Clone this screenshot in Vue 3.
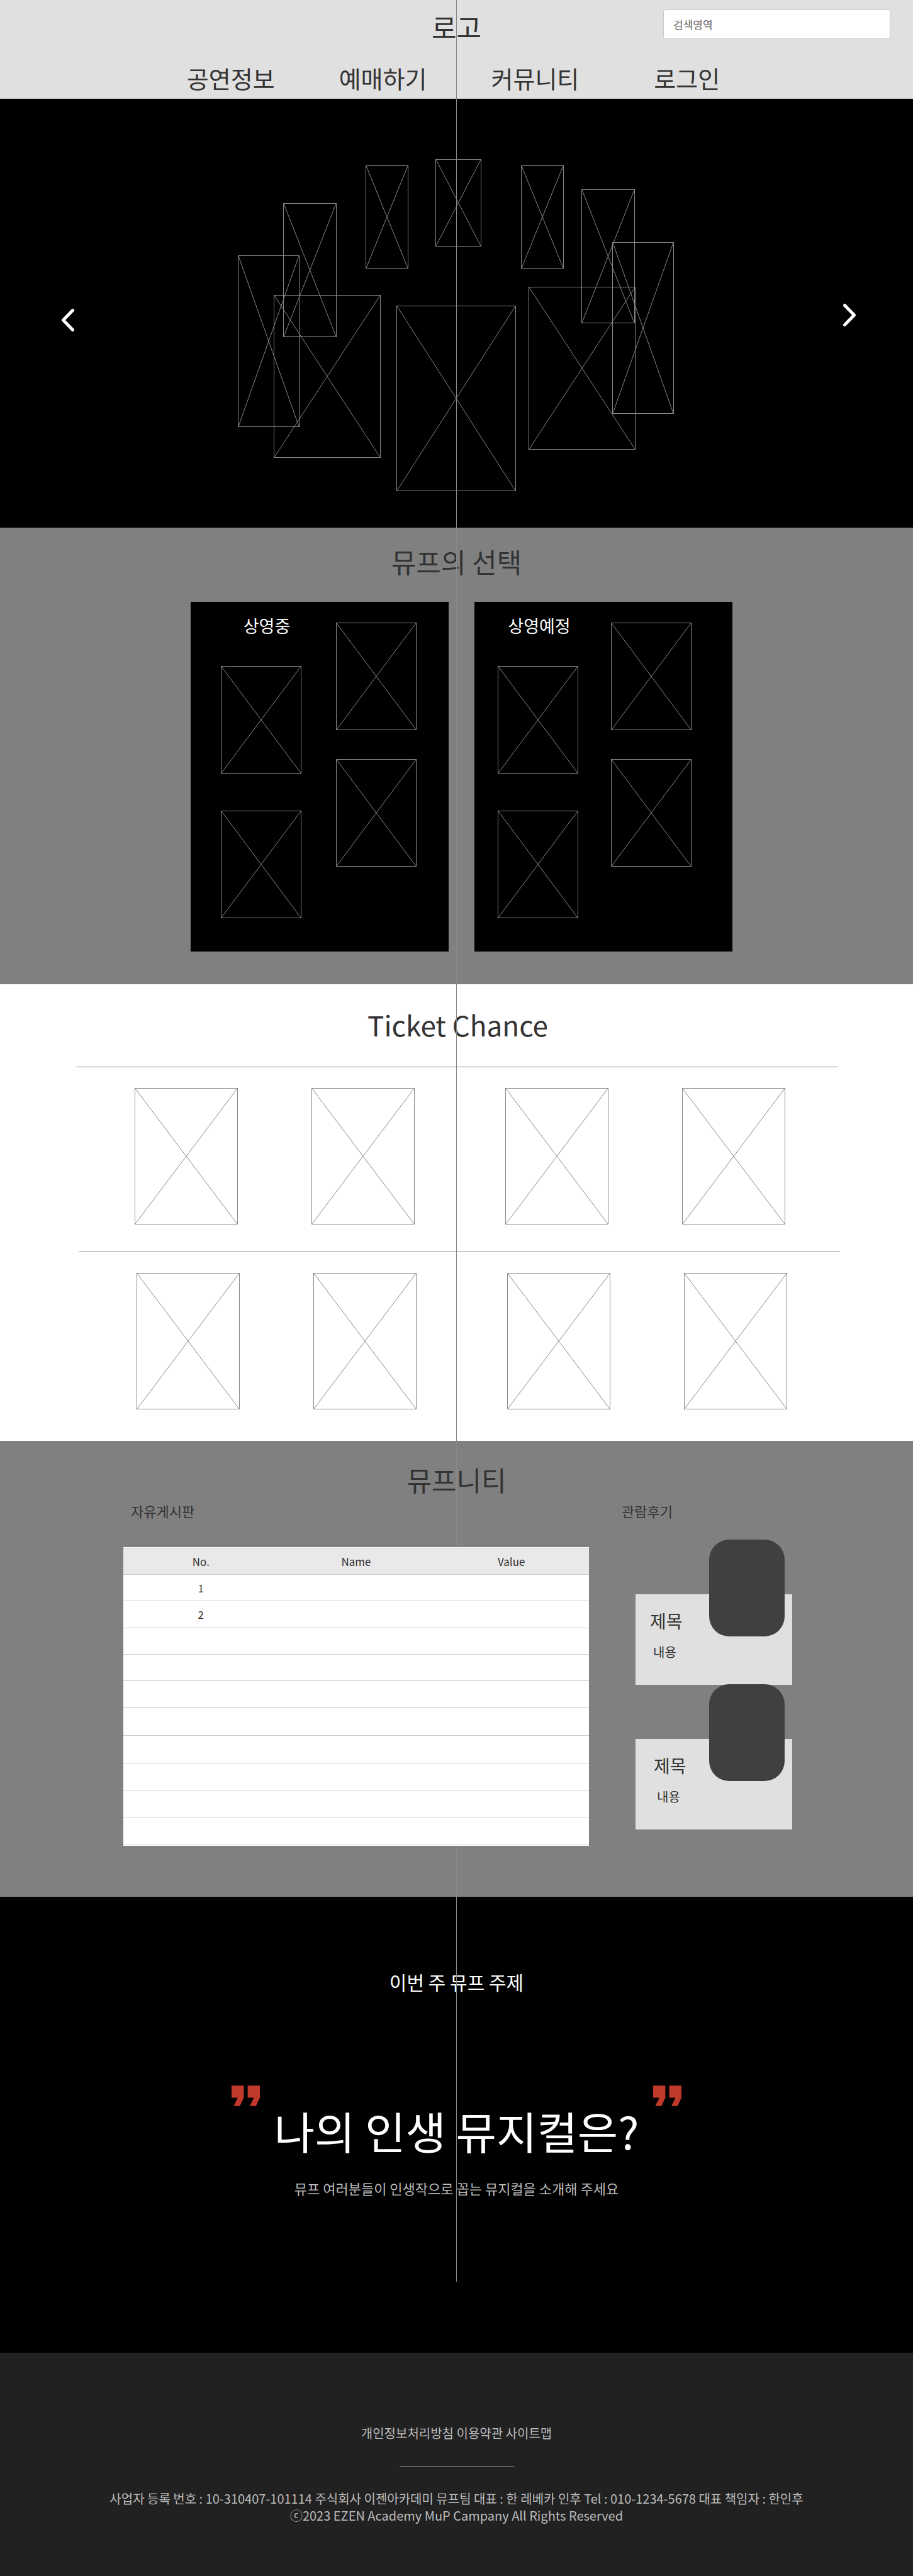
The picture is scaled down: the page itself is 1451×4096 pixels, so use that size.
<script setup>
import { h } from 'vue'

// Crossed rectangle that stands in for a poster image
const Frame = () =>
  h('svg', { class: 'frame', 'aria-hidden': 'true' }, [
    h('line', { x1: '0', y1: '0', x2: '100%', y2: '100%' }),
    h('line', { x1: '100%', y1: '0', x2: '0', y2: '100%' }),
  ])

const menu = ['공연정보', '예매하기', '커뮤니티', '로그인']

// Poster positions on the carousel stage
const posters = [
  { x: 203, y: 10, w: 68, h: 164 },
  { x: 314, y: 0, w: 73, h: 139 },
  { x: 450, y: 10, w: 68, h: 164 },
  { x: 72, y: 70, w: 85, h: 213 },
  { x: 546, y: 48, w: 85, h: 213 },
  { x: 0, y: 153, w: 98, h: 273 },
  { x: 595, y: 132, w: 98, h: 273 },
  { x: 57, y: 216, w: 170, h: 259 },
  { x: 462, y: 203, w: 170, h: 259 },
  { x: 252, y: 233, w: 190, h: 295 },
]
const place = (p) => ({
  left: p.x + 'px',
  top: p.y + 'px',
  width: p.w + 'px',
  height: p.h + 'px',
})

const columns = ['No.', 'Name', 'Value']
const rows = Array.from({ length: 10 }, (_, i) => (i < 2 ? String(i + 1) : ''))
</script>

<template>
  <div class="page">
    <div class="main">
      <header class="header">
        <div class="top">
          <a href="#" class="logo">로고</a>
          <input class="search" type="search" placeholder="검색영역" aria-label="검색영역" />
        </div>
        <nav class="menu">
          <a v-for="item in menu" :key="item" href="#">{{ item }}</a>
        </nav>
      </header>

      <section class="hero">
        <button class="arrow prev" type="button" aria-label="이전">
          <svg width="22" height="38" viewBox="0 0 22 38">
            <path d="M18.500 3.500 3.500 19l15 15.500" />
          </svg>
        </button>
        <div class="stage">
          <div v-for="(p, i) in posters" :key="i" class="poster" :style="place(p)"><Frame /></div>
        </div>
        <button class="arrow next" type="button" aria-label="다음">
          <svg width="22" height="38" viewBox="0 0 22 38">
            <path d="M3.500 3.500 18.500 19l-15 15.500" />
          </svg>
        </button>
      </section>

      <section class="picks">
        <h2 class="title">뮤프의 선택</h2>
        <div class="panels">
          <article class="panel now">
            <div class="col">
              <h3>상영중</h3>
              <div class="thumb"><Frame /></div>
              <div class="thumb"><Frame /></div>
            </div>
            <div class="col high">
              <div class="thumb"><Frame /></div>
              <div class="thumb"><Frame /></div>
            </div>
          </article>
          <article class="panel soon">
            <div class="col">
              <h3>상영예정</h3>
              <div class="thumb"><Frame /></div>
              <div class="thumb"><Frame /></div>
            </div>
            <div class="col high">
              <div class="thumb"><Frame /></div>
              <div class="thumb"><Frame /></div>
            </div>
          </article>
        </div>
      </section>

      <section class="tickets">
        <h2 class="title">Ticket Chance</h2>
        <div v-for="r in 2" :key="r" class="ticket-row">
          <div v-for="p in 2" :key="p" class="pair">
            <div class="ticket"><Frame /></div>
            <div class="ticket"><Frame /></div>
          </div>
        </div>
      </section>

      <section class="community">
        <h2 class="title">뮤프니티</h2>
        <div class="boards">
          <div class="board">
            <h3>자유게시판</h3>
            <div class="sheet">
              <table>
                <thead>
                  <tr>
                    <th v-for="c in columns" :key="c" scope="col">{{ c }}</th>
                  </tr>
                </thead>
                <tbody>
                  <tr v-for="(n, i) in rows" :key="i">
                    <td>{{ n }}</td>
                    <td></td>
                    <td></td>
                  </tr>
                </tbody>
              </table>
            </div>
          </div>
          <div class="reviews">
            <h3>관람후기</h3>
            <article v-for="n in 2" :key="n" class="review">
              <h4>제목</h4>
              <p>내용</p>
              <div class="photo"></div>
            </article>
          </div>
        </div>
      </section>

      <section class="topic">
        <h2>이번 주 뮤프 주제</h2>
        <div class="quote">
          <svg class="mark" viewBox="0 0 225 162" aria-hidden="true">
            <path d="M0 0h97v96l-31 66H17l32-66H0zM128 0h97v96l-31 66h-49l32-66h-49z" />
          </svg>
          <p class="question">나의 인생 뮤지컬은?</p>
          <svg class="mark" viewBox="0 0 225 162" aria-hidden="true">
            <path d="M0 0h97v96l-31 66H17l32-66H0zM128 0h97v96l-31 66h-49l32-66h-49z" />
          </svg>
        </div>
        <p class="lead">뮤프 여러분들이 인생작으로 꼽는 뮤지컬을 소개해 주세요</p>
      </section>

      <div class="guide"></div>
    </div>

    <footer class="footer">
      <nav><a href="#">개인정보처리방침</a> <a href="#">이용약관</a> <a href="#">사이트맵</a></nav>
      <hr />
      <p>사업자 등록 번호 : 10-310407-101114 주식회사 이젠아카데미 뮤프팀 대표 : 한 레베카 인후 Tel : 010-1234-5678 대표 책임자 : 한인후</p>
      <p>ⓒ2023 EZEN Academy MuP Campany All Rights Reserved</p>
    </footer>
  </div>
</template>

<style>
body {
  margin: 0;
}
.frame {
  display: block;
  box-sizing: border-box;
  width: 100%;
  height: 100%;
  border: 1px solid #888;
}
.frame line {
  stroke: #888;
  stroke-width: 1px;
}
</style>

<style scoped>
.page {
  font-family: "Noto Sans CJK KR", "Noto Sans", sans-serif;
  color: #333;
  background: #000;
}
.main {
  position: relative;
}
h2,
h3,
h4,
p {
  margin: 0;
  font-weight: 400;
}
a {
  color: inherit;
  text-decoration: none;
}
.title {
  font-size: 43px;
  line-height: 62px;
  text-align: center;
}
.guide {
  position: absolute;
  top: 0;
  bottom: 113px;
  left: calc(50% - 1px);
  width: 1px;
  background: #888;
}

.header {
  padding: 11px 0 5px;
  background: #e0e0e0;
}
.top {
  display: grid;
  grid-template-columns: 1fr auto 1fr;
  align-items: start;
  padding: 0 36px;
}
.logo {
  grid-column: 2;
  font-size: 43px;
  line-height: 62px;
}
.search {
  justify-self: end;
  box-sizing: border-box;
  width: 361px;
  height: 47px;
  margin-top: 4px;
  padding: 0 15px;
  border: 1px solid #ccc;
  border-radius: 4px;
  background: #fff;
  font-family: inherit;
  font-size: 17px;
  color: #333;
}
.search::placeholder {
  color: #666;
  opacity: 1;
}
.menu {
  display: flex;
  justify-content: center;
  gap: 102px;
  margin-top: 23px;
  padding-right: 10px;
  font-size: 38px;
  line-height: 56px;
}
.menu a:last-child {
  margin-left: 17px;
}

.hero {
  display: flex;
  justify-content: space-between;
  padding: 96px 83px 58px 90px;
  background: #000;
}
.stage {
  position: relative;
  width: 693px;
  height: 528px;
  margin-right: 9px;
}
.poster {
  position: absolute;
}
.arrow {
  display: flex;
  align-self: flex-start;
  padding: 0 7px;
  border: 0;
  background: none;
  cursor: pointer;
}
.prev {
  margin-top: 237px;
}
.next {
  margin-top: 229px;
}
.arrow path {
  fill: none;
  stroke: #fff;
  stroke-width: 5;
  stroke-linecap: round;
  stroke-linejoin: round;
}

.picks {
  padding: 22px 0 52px;
  background: #808080;
}
.panels {
  display: flex;
  justify-content: center;
  gap: 41px;
  margin-top: 34px;
  padding-left: 16px;
}
.panel {
  display: flex;
  box-sizing: border-box;
  width: 410px;
  height: 556px;
  background: #000;
  color: #fff;
}
.now {
  gap: 55px;
  padding-left: 48px;
}
.soon {
  gap: 52px;
  padding-left: 37px;
}
.col {
  display: flex;
  flex-direction: column;
  gap: 59px;
  padding-top: 18px;
}
.col.high {
  gap: 46px;
  padding-top: 33px;
}
.col h3 {
  box-sizing: border-box;
  width: 128px;
  margin-bottom: -15px;
  padding-left: 4px;
  font-size: 27px;
  line-height: 40px;
  text-align: center;
  white-space: nowrap;
}
.now h3 {
  padding-left: 18px;
}
.thumb {
  width: 128px;
  height: 171px;
}

.tickets {
  padding: 33px 0 50px;
  background: #fff;
}
.tickets .title {
  padding-left: 4px;
  font-size: 44px;
}
.ticket-row {
  display: flex;
  justify-content: center;
  gap: 144px;
  box-sizing: border-box;
  width: 1210px;
  margin: 36px auto 0;
  padding: 33px 0 0 10px;
  border-top: 1px solid #888;
}
.ticket-row + .ticket-row {
  margin: 43px 0 0 calc(50% - 601px);
  padding-left: 8px;
}
.pair {
  display: flex;
  gap: 117px;
}
.ticket {
  width: 164px;
  height: 217px;
}

.community {
  padding: 30px 0 81px;
  background: #808080;
}
.boards {
  display: flex;
  justify-content: center;
  gap: 52px;
  margin-top: 3px;
  padding-left: 4px;
}
.boards h3 {
  font-size: 22px;
  line-height: 32px;
}
.board {
  width: 740px;
}
.board h3 {
  padding-left: 12px;
}
.sheet {
  position: relative;
  z-index: 1;
  margin-top: 42px;
  padding: 1px 0;
  background: #fff;
}
table {
  width: 100%;
  table-layout: fixed;
  border-collapse: collapse;
  border-top: 1px solid #ccc;
  font-size: 17px;
  line-height: 24px;
  text-align: center;
}
th,
td {
  box-sizing: border-box;
  height: 42px;
  padding: 0;
  border-bottom: 1px solid #ccc;
  font-weight: 400;
}
th {
  background: #e9e9e9;
}
tbody tr:nth-child(n + 6) td {
  height: 44px;
}
tbody tr:nth-child(3n + 2) td,
tbody tr:nth-child(10) td {
  height: 43px;
}
.reviews {
  width: 271px;
}
.review {
  position: relative;
  box-sizing: border-box;
  width: 249px;
  height: 144px;
  margin: 117px 0 0 22px;
  padding: 22px 0 0 23px;
  background: #e0e0e0;
}
.review + .review {
  margin-top: 86px;
  padding-left: 29px;
}
.review h4 {
  font-size: 28px;
  line-height: 40px;
}
.review p {
  margin-top: 16px;
  padding-left: 5px;
  font-size: 20px;
  line-height: 28px;
}
.photo {
  position: absolute;
  top: -87px;
  right: 12px;
  width: 120px;
  height: 154px;
  border-radius: 32px;
  background: #404040;
}

.topic {
  padding: 113px 0 246px;
  background: #000;
  color: #fff;
  text-align: center;
}
.topic h2 {
  font-size: 30px;
  line-height: 44px;
}
.quote {
  display: flex;
  justify-content: center;
  gap: 23px;
  margin-top: 143px;
}
.mark {
  width: 45px;
  height: 33px;
  fill: #c0392b;
}
.question {
  margin-top: 22px;
  font-size: 70px;
  line-height: 100px;
}
.lead {
  margin-top: 25px;
  font-size: 22px;
  line-height: 32px;
  color: #bbb;
}

.footer {
  padding: 113px 0 84px;
  background: #212121;
  color: #bbb;
  font-size: 20px;
  line-height: 27px;
  text-align: center;
}
.footer nav {
  line-height: 30px;
}
.footer hr {
  width: 182px;
  height: 1px;
  margin: 37px auto;
  border: 0;
  background: #888;
}
</style>
